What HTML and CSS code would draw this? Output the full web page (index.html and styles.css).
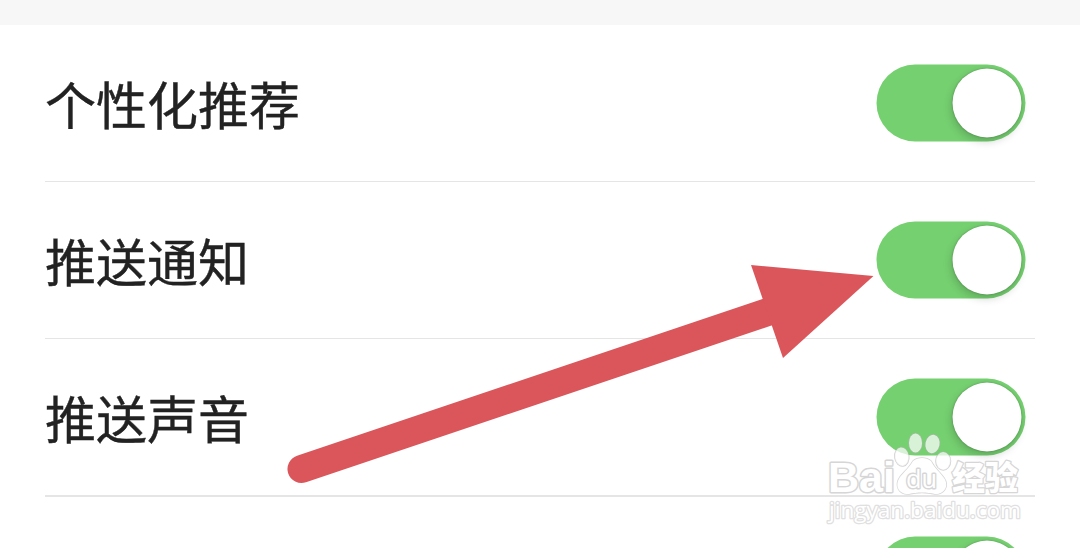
FILE: index.html
```
<!DOCTYPE html>
<html lang="zh-CN">
<head>
	<meta charset="UTF-8">
	<title>设置</title>
	<link rel="stylesheet" href="styles.css">
</head>
<body>
<div class="gap"></div>
<ul class="list">
	<li><span>个性化推荐</span><div class="switch"><i></i></div></li>
	<li><span>推送通知</span><div class="switch"><i></i></div></li>
	<li class="thick"><span>推送声音</span><div class="switch"><i></i></div></li>
	<li class="last"><div class="switch"><i></i></div></li>
</ul>
<!-- 箭头 -->
<svg class="arrow" width="1080" height="548" viewBox="0 0 1080 548">
	<line x1="301.500" y1="469" x2="775" y2="309.500" stroke="#da565b" stroke-width="28" stroke-linecap="round"/>
	<path d="M751 265L873.500 276L783 358Z" fill="#da565b"/>
</svg>
<!-- 水印 -->
<svg class="mark" width="210" height="108" viewBox="820 430 210 108">
	<g class="logo">
		<text class="bai" x="828" y="492" textLength="67" lengthAdjust="spacingAndGlyphs">Bai</text>
		<ellipse class="toe" cx="901.800" cy="456.700" rx="7" ry="9.300" transform="rotate(-8 901.800 456.700)"/>
		<ellipse class="toe" cx="915.500" cy="443" rx="6.500" ry="9.500"/>
		<ellipse class="toe" cx="932.500" cy="444" rx="7" ry="9.200" transform="rotate(12 932.500 444)"/>
		<ellipse class="toe" cx="943.200" cy="461" rx="7.300" ry="9"/>
		<path class="palm" d="M913 461C918 457 926 457 931 461C935 469 940 472 944 478C950 487 943 494.500 935 494C927 492 917 492 909 494C899 494.500 894 486 900 477C904 472 909 468 913 461Z"/>
		<text class="du" x="906" y="488" textLength="31" lengthAdjust="spacingAndGlyphs">du</text>
		<text class="jy" x="952" y="490">经验</text>
		<text class="url" x="829" y="518" textLength="192" lengthAdjust="spacingAndGlyphs">jingyan.baidu.com</text>
	</g>
</svg>
</body>
</html>
```
FILE: styles.css
```
*{
	margin:0;
	padding:0;
	box-sizing: border-box;
}
body{
	height: 548px;
	overflow: hidden;
	position: relative;
	background: #fff;
	font-family: "Noto Sans CJK SC", sans-serif;
}
li{list-style: none}
.gap{
	height: 25px;
	background: #f7f7f7;
}
.list{
	padding: 0 45px;
}
.list li{
	display: flex;
	justify-content: space-between;
	align-items: center;
	height: 157px;
	padding-right: 9px;
	border-bottom: 1px solid #e5e5e5;
}
.list li.thick{
	height: 158px;
	border-bottom-width: 2px;
}
.list li.last{
	height: 51px;
	align-items: flex-start;
	justify-content: flex-end;
	padding-top: 40px;
	border: none;
	overflow: hidden;
}
.list span{
	font-size: 51px;
	line-height: 75px;
	color: #222;
	-webkit-text-stroke: 0.4px #222;
}
.switch{
	flex-shrink: 0;
	display: flex;
	justify-content: flex-end;
	width: 149px;
	height: 77px;
	padding: 4px;
	border-radius: 39px;
	background: #75d070;
	transform: translate(-0.5px,-0.5px);
}
.switch i{
	width: 69px;
	height: 69px;
	border-radius: 50%;
	background: #fff;
	box-shadow: 0 0 2px rgba(0,0,0,0.3), -1px 4px 9px rgba(0,0,0,0.18);
}
.arrow{
	position: absolute;
	left: 0;
	top: 0;
}
.mark{
	position: absolute;
	left: 820px;
	top: 430px;
}
.logo{
	fill: #fff;
	stroke: #d6d6d6;
	stroke-width: 1.5px;
	paint-order: stroke;
	stroke-linejoin: round;
}
.logo .toe{
	fill: rgba(255,255,255,0.72);
	stroke: rgba(180,180,180,0.6);
}
.bai{
	font: bold 42px "Liberation Sans", sans-serif;
	stroke-width: 3px;
}
.du{
	font: 26px "Open Sans", sans-serif;
	stroke-width: 3px;
}
.jy{
	font: 900 33px "Noto Sans CJK SC", sans-serif;
	stroke-width: 2.5px;
}
.url{
	font: 22px "Open Sans", sans-serif;
	stroke: #e0e0e0;
	stroke-width: 2.5px;
}
```
